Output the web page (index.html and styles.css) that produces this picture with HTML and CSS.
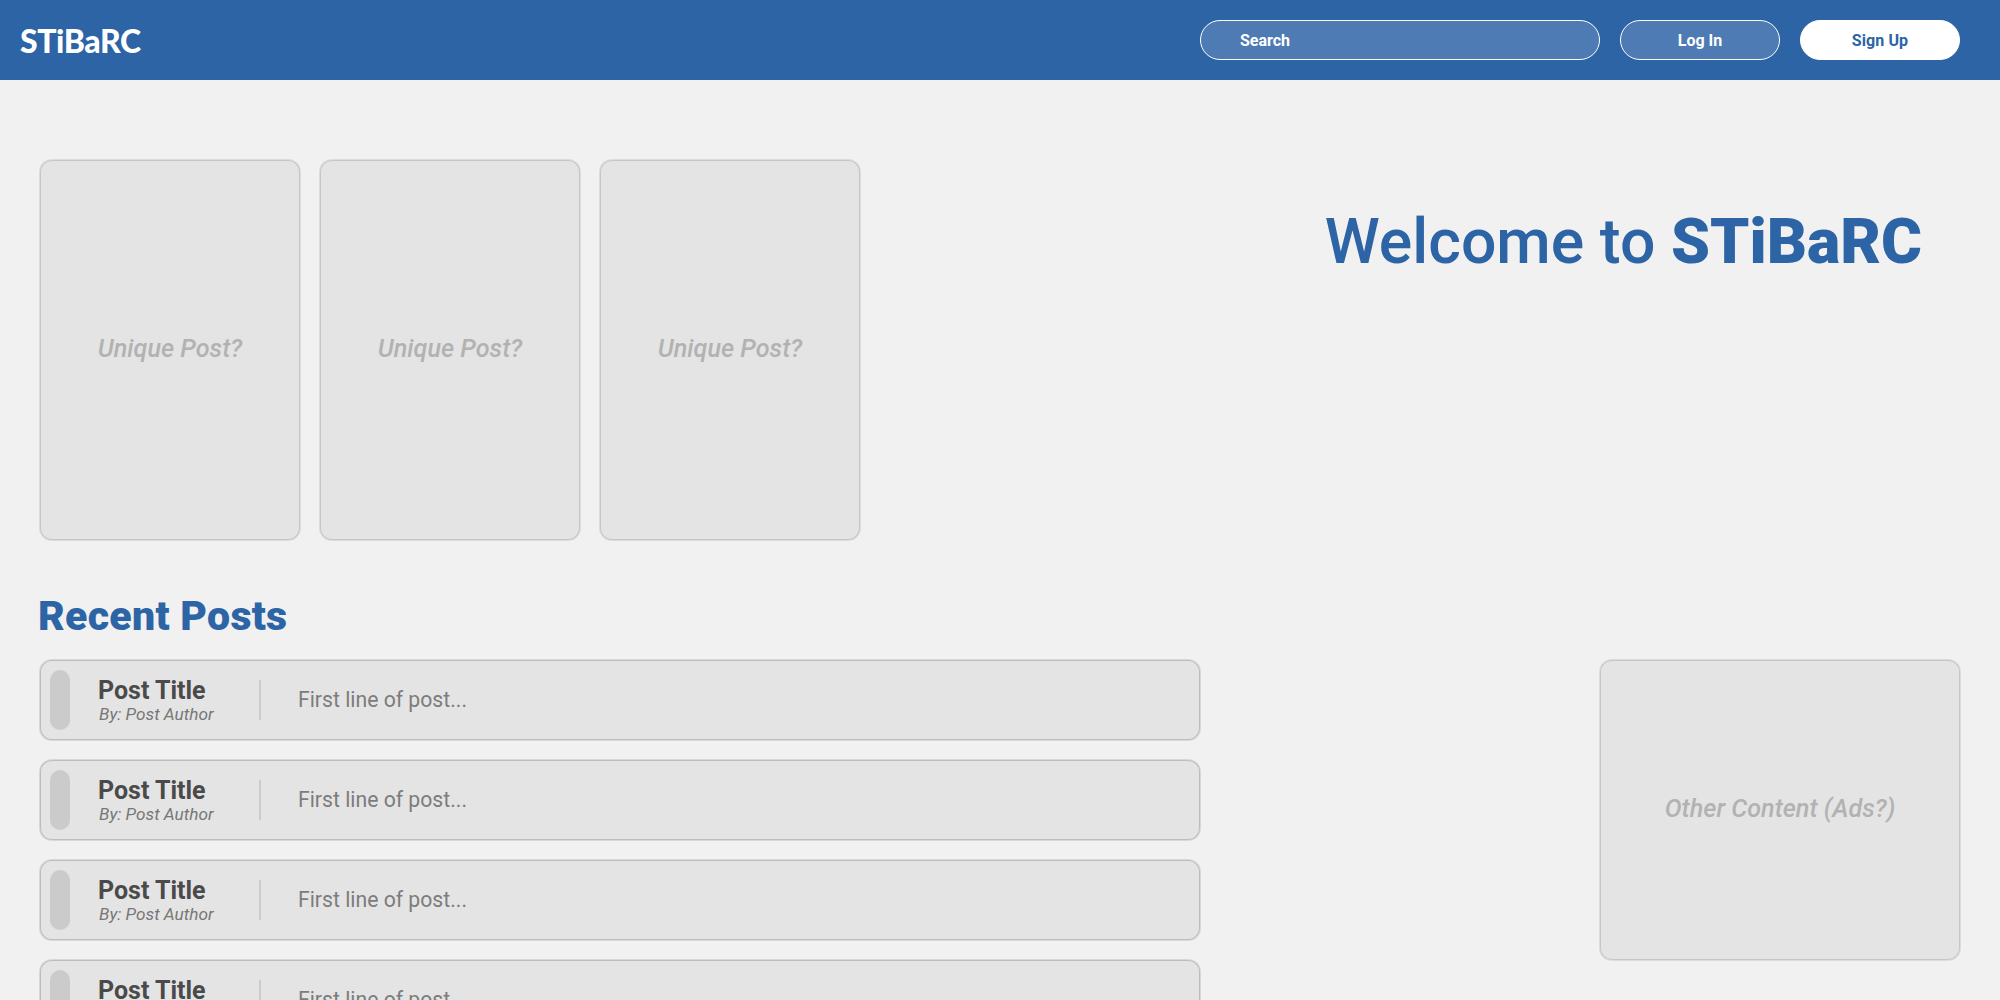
FILE: index.html
```html
<!DOCTYPE html>
<html lang="en">
<head>
<meta charset="utf-8">
<title>STiBaRC</title>
<link rel="stylesheet" href="styles.css">
</head>
<body>
<header class="topbar">
  <a class="logo">STiBaRC</a>
  <nav class="actions">
    <div class="pill search">Search</div>
    <div class="pill login">Log In</div>
    <div class="pill signup">Sign Up</div>
  </nav>
</header>
<main class="main">
  <section class="hero">
    <div class="featured">
      <div class="card unique">Unique Post?</div>
      <div class="card unique">Unique Post?</div>
      <div class="card unique">Unique Post?</div>
    </div>
    <h1 class="welcome">Welcome to <strong>STiBaRC</strong></h1>
  </section>
  <h2 class="section-title">Recent Posts</h2>
  <section class="content">
    <div class="posts">
      <article class="post"><span class="thumb"></span><div class="meta"><div class="title">Post Title</div><div class="author">By: Post Author</div></div><p class="excerpt">First line of post...</p></article>
      <article class="post"><span class="thumb"></span><div class="meta"><div class="title">Post Title</div><div class="author">By: Post Author</div></div><p class="excerpt">First line of post...</p></article>
      <article class="post"><span class="thumb"></span><div class="meta"><div class="title">Post Title</div><div class="author">By: Post Author</div></div><p class="excerpt">First line of post...</p></article>
      <article class="post"><span class="thumb"></span><div class="meta"><div class="title">Post Title</div><div class="author">By: Post Author</div></div><p class="excerpt">First line of post...</p></article>
    </div>
    <aside class="card side">Other Content (Ads?)</aside>
  </section>
</main>
</body>
</html>
```
FILE: styles.css
```css
* { box-sizing: border-box; }
html, body { margin: 0; height: 100%; overflow: hidden; }
body { background: #f1f1f1; font-family: Roboto, "Liberation Sans", sans-serif; }
.topbar { height: 80px; background: #2c64a5; display: flex; align-items: center; justify-content: space-between; padding: 0 40px 0 20px; }
.logo { font-family: Lato, sans-serif; font-weight: 900; font-size: 32px; color: #fff; letter-spacing: -0.4px; }
.actions { display: flex; gap: 20px; }
.pill { height: 40px; border-radius: 20px; display: flex; align-items: center; justify-content: center; font-size: 16px; font-weight: 700; color: #fff; border: 1px solid #fff; background: #4e7bb4; }
.search { width: 400px; justify-content: flex-start; padding-left: 39px; }
.login { width: 160px; }
.signup { width: 160px; background: #fff; color: #2c64a5; letter-spacing: 0.1px; }
.main { padding: 80px 40px 0; }
.hero { display: flex; justify-content: space-between; padding-right: 38px; }
.featured { display: flex; gap: 20px; }
.card { background: #e4e4e4; box-shadow: 0 0 0 1px #dcdcdc, inset 0 0 0 1px #c6c6c6; border-radius: 12px; display: flex; align-items: center; justify-content: center; color: #b2b2b2; font-style: italic; font-weight: 500; font-size: 25.2px; padding-bottom: 4px; }
.unique { width: 260px; height: 380px; }
.welcome { margin: 44px 0 0; font-size: 62.5px; line-height: 76px; font-weight: 500; color: #2c64a5; }
.welcome strong { font-weight: 900; }
.section-title { margin: 51px 0 19px -2px; font-size: 41px; line-height: 50px; font-weight: 900; letter-spacing: 0.3px; color: #2c64a5; }
.content { display: flex; justify-content: space-between; align-items: flex-start; }
.posts { width: 1160px; display: flex; flex-direction: column; gap: 20px; }
.post { height: 80px; background: #e4e4e4; box-shadow: 0 0 0 1px #d8d8d8, inset 0 0 0 1px #bdbdbd; border-radius: 12px; display: flex; align-items: center; padding-left: 10px; }
.thumb { width: 20px; height: 60px; border-radius: 10px; background: #cbcbcb; }
.meta { width: 163px; height: 40px; margin-left: 28px; border-right: 2px solid #cbcbcb; display: flex; flex-direction: column; align-items: flex-start; }
.title { font-size: 25px; line-height: 26px; font-weight: 700; color: #4a4a4a; margin-top: -2px; }
.author { font-size: 17.2px; line-height: 21px; font-style: italic; color: #777; margin-left: 1px; }
.excerpt { margin: 0 0 0 37px; font-size: 21.2px; font-weight: 400; color: #7c7c7c; padding-bottom: 2px; }
.side { width: 360px; height: 300px; }
```
